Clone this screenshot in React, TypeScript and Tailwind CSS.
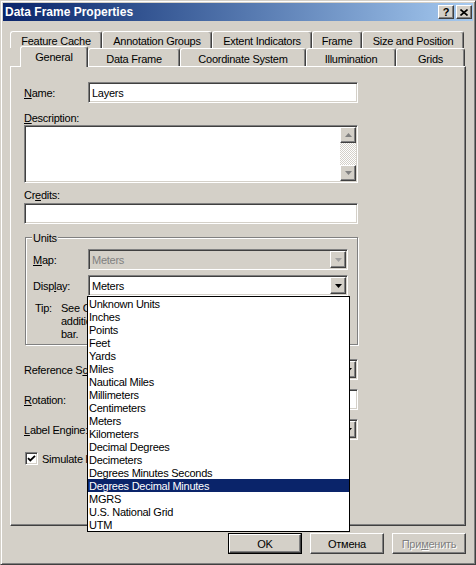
import React from "react"

const sunken =
  "border border-t-[#808080] border-l-[#808080] border-r-white border-b-white shadow-[inset_1px_1px_0_#404040,inset_-1px_-1px_0_#d4d0c8]"
const raised =
  "border border-t-white border-l-white border-r-[#404040] border-b-[#404040] shadow-[inset_-1px_-1px_0_#808080]"

const units = [
  "Unknown Units",
  "Inches",
  "Points",
  "Feet",
  "Yards",
  "Miles",
  "Nautical Miles",
  "Millimeters",
  "Centimeters",
  "Meters",
  "Kilometers",
  "Decimal Degrees",
  "Decimeters",
  "Degrees Minutes Seconds",
  "Degrees Decimal Minutes",
  "MGRS",
  "U.S. National Grid",
  "UTM",
]

function Arrow({ color = "#000", up = false }: { color?: string; up?: boolean }) {
  return (
    <svg width="7" height="4" viewBox="0 0 7 4">
      <path d={up ? "M0 4h7L3.5 0z" : "M0 0h7L3.5 4z"} fill={color} />
    </svg>
  )
}

function Combo({
  value = "",
  disabled = false,
  className = "",
}: {
  value?: string
  disabled?: boolean
  className?: string
}) {
  return (
    <div
      className={`${sunken} flex p-[1px] ${disabled ? "bg-[#d4d0c8] text-[#808080]" : "bg-white"} ${className}`}
    >
      <div className="flex-1 flex items-center pl-[2px] pt-[2px] overflow-hidden whitespace-nowrap">{value}</div>
      <div className={`${raised} w-[16px] bg-[#d4d0c8] flex items-center justify-center`}>
        <Arrow color={disabled ? "#a0a0a0" : "#000"} />
      </div>
    </div>
  )
}

function Tab({ label, className = "" }: { label: string; className?: string }) {
  return (
    <div
      className={`h-full flex justify-center bg-[#d4d0c8] border-t border-l border-r border-t-white border-l-white border-r-[#404040] shadow-[inset_-1px_0_0_#808080] rounded-t-[3px] whitespace-nowrap ${className}`}
    >
      {label}
    </div>
  )
}

export default function App() {
  return (
    <div className="w-[476px] h-[565px] flex flex-col bg-[#d4d0c8] p-[2px] border border-t-[#d4d0c8] border-l-[#d4d0c8] border-r-[#404040] border-b-[#404040] shadow-[inset_1px_1px_0_#fff,inset_-1px_-1px_0_#808080] font-['Liberation_Sans',Arial,sans-serif] text-[11px] tracking-[-0.25px] text-black leading-[13px]">
      {/* Title bar */}
      <div className="h-[18px] flex items-center pl-[2px] pr-[1px] bg-gradient-to-r from-[#0a246a] to-[#a6caf0]">
        <span className="flex-1 text-white font-bold text-[12px] tracking-normal">Data Frame Properties</span>
        <div className={`${raised} w-[16px] h-[14px] bg-[#d4d0c8] flex items-center justify-center font-bold text-[11px] leading-none`}>
          ?
        </div>
        <div className={`${raised} ml-[2px] w-[16px] h-[14px] bg-[#d4d0c8] flex items-center justify-center`}>
          <svg width="8" height="7" viewBox="0 0 8 7">
            <path d="M0.5 0.5l7 6M7.5 0.5l-7 6" stroke="#000" strokeWidth="1.6" />
          </svg>
        </div>
      </div>

      <div className="flex-1 flex flex-col px-[7px] pt-[10px]">
        {/* Tabs: back row */}
        <div className="flex h-[17px]">
          <Tab label="Feature Cache" className="w-[92px] pt-[3px]" />
          <Tab label="Annotation Groups" className="w-[110px] pt-[3px]" />
          <Tab label="Extent Indicators" className="w-[100px] pt-[3px]" />
          <Tab label="Frame" className="w-[50px] pt-[3px]" />
          <Tab label="Size and Position" className="w-[102px] pt-[3px]" />
        </div>
        {/* Tabs: front row */}
        <div className="relative z-10 flex items-end h-[18px] pl-[10px]">
          <div className="relative w-[68px] h-[21px] -mb-[1px] flex justify-center pt-[4px] bg-[#d4d0c8] border-t border-l border-r border-t-white border-l-white border-r-[#404040] shadow-[inset_-1px_0_0_#808080] rounded-t-[3px]">
            General
          </div>
          <div className="flex h-[18px]">
            <Tab label="Data Frame" className="w-[92px] pt-[4px]" />
            <Tab label="Coordinate System" className="w-[126px] pt-[4px]" />
            <Tab label="Illumination" className="w-[90px] pt-[4px]" />
            <Tab label="Grids" className="w-[69px] pt-[4px]" />
          </div>
        </div>

        {/* Panel */}
        <div className="h-[460px] flex flex-col pl-[13px] pr-[107px] pt-[15px] border border-t-white border-l-white border-r-[#404040] border-b-[#404040] shadow-[inset_-1px_-1px_0_#808080]">
          <div className="flex items-center">
            <span className="w-[64px] pt-[2px]">
              <u>N</u>ame:
            </span>
            <div className={`${sunken} flex-1 h-[21px] bg-white flex items-center pl-[3px] pt-[2px]`}>Layers</div>
          </div>

          <div className="mt-[9px] h-[13px]">
            <u>D</u>escription:
          </div>
          <div className={`${sunken} h-[58px] bg-white flex justify-end p-[1px]`}>
            <div className="w-[16px] flex flex-col">
              <div className={`${raised} h-[16px] bg-[#d4d0c8] flex items-center justify-center`}>
                <Arrow color="#808080" up />
              </div>
              <div className="flex-1 bg-[repeating-conic-gradient(#d4d0c8_0_25%,#ffffff_0_50%)] bg-[length:2px_2px]" />
              <div className={`${raised} h-[16px] bg-[#d4d0c8] flex items-center justify-center`}>
                <Arrow color="#808080" />
              </div>
            </div>
          </div>

          <div className="mt-[6px] h-[13px]">
            Cr<u>e</u>dits:
          </div>
          <div className={`${sunken} mt-[1px] h-[21px] bg-white`} />

          {/* Units group */}
          <div className="relative mt-[13px] ml-[1px] pl-[7px] pr-[9px] pt-[11px] pb-[3px] border border-[#808080] shadow-[1px_1px_0_#fff,inset_1px_1px_0_#fff]">
            <span className="absolute left-[6px] -top-[6px] px-[1px] bg-[#d4d0c8]">Units</span>
            <div className="flex items-center">
              <span className="w-[55px] pt-[2px]">
                <u>M</u>ap:
              </span>
              <Combo value="Meters" disabled className="flex-1 h-[21px]" />
            </div>
            <div className="flex items-center mt-[5px]">
              <span className="w-[55px] pt-[2px]">
                Disp<u>l</u>ay:
              </span>
              <div className="relative flex-1">
                <Combo value="Meters" className="h-[21px]" />
                <div className="absolute z-50 top-full -left-[1px] w-[263px] bg-white border border-black">
                  {units.map((u) => (
                    <div
                      key={u}
                      className={`h-[13px] pl-[1px] pt-[1px] leading-[12px] whitespace-nowrap ${
                        u === "Degrees Decimal Minutes" ? "bg-[#0a246a] text-white" : ""
                      }`}
                    >
                      {u}
                    </div>
                  ))}
                </div>
              </div>
            </div>
            <div className="flex mt-[6px]">
              <span className="w-[28px] pl-[2px]">Tip:</span>
              <div className="flex-1 overflow-hidden whitespace-nowrap">
                <div>See Customize &gt; ArcMap Options &gt; Data View tab for</div>
                <div>additional options for displaying coordinates in the status</div>
                <div>bar.</div>
              </div>
            </div>
          </div>

          <div className="flex items-center mt-[14px]">
            <span className="w-[86px] pt-[2px] whitespace-nowrap">
              Reference S<u>c</u>ale:
            </span>
            <Combo className="flex-1 h-[21px]" />
          </div>
          <div className="flex items-center mt-[9px]">
            <span className="w-[86px] pt-[2px]">
              <u>R</u>otation:
            </span>
            <div className={`${sunken} flex-1 h-[21px] bg-white`} />
          </div>
          <div className="flex items-center mt-[9px]">
            <span className="w-[86px] pt-[2px] whitespace-nowrap">
              <u>L</u>abel Engine:
            </span>
            <Combo className="flex-1 h-[21px]" />
          </div>
          <div className="flex items-center mt-[11px] ml-[1px] whitespace-nowrap">
            <div className={`${sunken} w-[13px] h-[13px] bg-white flex items-center justify-center`}>
              <svg width="9" height="9" viewBox="0 0 9 9">
                <path d="M1 4.2l2.3 2.3L8 1.8" stroke="#000" strokeWidth="1.8" fill="none" />
              </svg>
            </div>
            <span className="ml-[4px] pt-[2px]">Simulate layer transparency in legends</span>
          </div>
        </div>

        {/* Buttons */}
        <div className="flex justify-end gap-[8px] mt-[7px]">
          <div className="w-[74px] h-[21px] border border-black">
            <div className={`${raised} w-full h-full bg-[#d4d0c8] flex items-center justify-center pt-[1px]`}>OK</div>
          </div>
          <div className={`${raised} w-[74px] h-[21px] bg-[#d4d0c8] flex items-center justify-center pt-[1px]`}>Отмена</div>
          <div
            className={`${raised} w-[74px] h-[21px] bg-[#d4d0c8] flex items-center justify-center pt-[1px] text-[#808080] [text-shadow:1px_1px_0_#fff]`}
          >
            При<u>м</u>енить
          </div>
        </div>
      </div>
    </div>
  )
}
